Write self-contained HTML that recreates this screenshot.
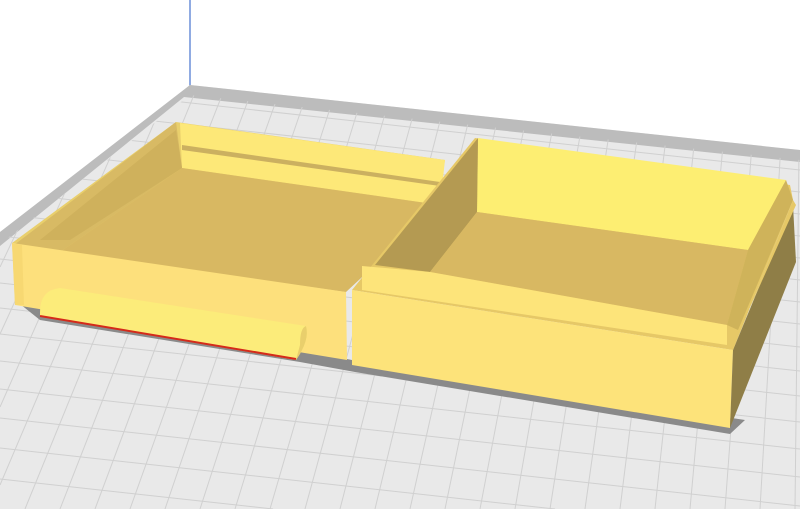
<!DOCTYPE html>
<html><head><style>html,body{margin:0;padding:0;background:#fff;width:800px;height:509px;overflow:hidden;}svg{display:block}</style></head>
<body>
<svg width="800" height="509" viewBox="0 0 800 509" xmlns="http://www.w3.org/2000/svg">
<defs><clipPath id="pl"><polygon points="190,95 800,160 800,509 0,509 0,244"/></clipPath></defs>
<rect width="800" height="509" fill="#ffffff"/>
<line x1="190" y1="0" x2="190" y2="86" stroke="#6a8fd8" stroke-width="1.5"/>
<polygon points="190,85 800,150 800,509 0,509 0,232" fill="#e9e9e9"/>
<polygon points="190,85 800,150 800,162 184,97 0,246 0,232" fill="#bcbcbc"/>
<g stroke="#d0d0d0" stroke-width="1" fill="none" clip-path="url(#pl)">
<line x1="0" y1="82" x2="800" y2="170"/><line x1="0" y1="104" x2="800" y2="192"/><line x1="0" y1="126" x2="800" y2="214"/><line x1="0" y1="148" x2="800" y2="236"/><line x1="0" y1="170" x2="800" y2="258"/><line x1="0" y1="192" x2="800" y2="280"/><line x1="0" y1="214" x2="800" y2="302"/><line x1="0" y1="236" x2="800" y2="324"/><line x1="0" y1="259" x2="800" y2="347"/><line x1="0" y1="283" x2="800" y2="371"/><line x1="0" y1="308" x2="800" y2="396"/><line x1="0" y1="334" x2="800" y2="422"/><line x1="0" y1="361" x2="800" y2="449"/><line x1="0" y1="389" x2="800" y2="477"/><line x1="0" y1="418" x2="800" y2="506"/><line x1="0" y1="448" x2="555" y2="509"/><line x1="0" y1="479" x2="273" y2="509"/>
<line x1="56" y1="90" x2="0" y2="204"/><line x1="84" y1="90" x2="0" y2="267"/><line x1="112" y1="90" x2="0" y2="334"/><line x1="140" y1="90" x2="0" y2="407"/><line x1="168" y1="90" x2="0" y2="485"/><line x1="196" y1="90" x2="25" y2="509"/><line x1="224" y1="90" x2="60" y2="509"/><line x1="252" y1="90" x2="95" y2="509"/><line x1="280" y1="90" x2="130" y2="509"/><line x1="308" y1="90" x2="165" y2="509"/><line x1="336" y1="90" x2="200" y2="509"/><line x1="364" y1="90" x2="235" y2="509"/><line x1="392" y1="90" x2="270" y2="509"/><line x1="420" y1="90" x2="305" y2="509"/><line x1="448" y1="90" x2="340" y2="509"/><line x1="476" y1="90" x2="375" y2="509"/><line x1="504" y1="90" x2="410" y2="509"/><line x1="532" y1="90" x2="445" y2="509"/><line x1="560" y1="90" x2="480" y2="509"/><line x1="588" y1="90" x2="515" y2="509"/><line x1="616" y1="90" x2="550" y2="509"/><line x1="644" y1="90" x2="585" y2="509"/><line x1="672" y1="90" x2="620" y2="509"/><line x1="700" y1="90" x2="655" y2="509"/><line x1="728" y1="90" x2="690" y2="509"/><line x1="756" y1="90" x2="725" y2="509"/><line x1="784" y1="90" x2="760" y2="509"/><line x1="799" y1="150" x2="795" y2="509"/>
</g>
<polygon points="15,300 40,320 300,362 355,372 730,434 745,420 352,360 300,350 15,296" fill="#8a8a8a"/>
<polygon points="12,243 176,122 445,160 440,188 345,292" fill="#e9cf6c"/>
<polygon points="180,123 445,160 440,205 182,168" fill="#fde878"/>
<polygon points="182,145 440,182 440,186 182,150" fill="#cbb060"/>
<polygon points="176,122 182,168 60,252 14,245" fill="#d8ba64"/>
<polygon points="176,130 182,168 70,240 40,240" fill="#cfb15c"/>
<polygon points="182,168 440,205 346,292 60,252" fill="#d8b862"/>
<polygon points="12,243 346,292 347,360 15,305" fill="#fde07c"/>
<polygon points="12,243 22,245 24,305 15,305" fill="#f7d872"/>
<path d="M40,312 Q40,290 60,288 L306,326 Q310,340 296,360 L40,316 Z" fill="#fcec7a"/>
<path d="M296,360 Q310,340 306,326 Q300,328 300,345 Z" fill="#e9cf6c"/>
<line x1="40" y1="316" x2="296" y2="359" stroke="#d42a1a" stroke-width="2"/>
<polygon points="352,290 475,138 790,185 793,200 733,350" fill="#e6c867"/>
<polygon points="478,138 786,180 748,250 477,212" fill="#fdee72"/>
<polygon points="478,138 477,212 430,272 375,265" fill="#b49a52"/>
<polygon points="477,212 748,250 727,325 430,272" fill="#d8b862"/>
<polygon points="786,180 793,200 738,330 727,325 748,250" fill="#cfb35a"/>
<polygon points="362,266 430,272 727,325 727,345 362,290" fill="#fde47a"/>
<polygon points="352,290 733,350 730,428 352,365" fill="#fde37a"/>
<polygon points="733,350 793,205 796,262 730,428" fill="#8f7e47"/>
<polygon points="727,345 740,330 796,205 793,200 733,350" fill="#e6c867"/>
</svg>
</body></html>
